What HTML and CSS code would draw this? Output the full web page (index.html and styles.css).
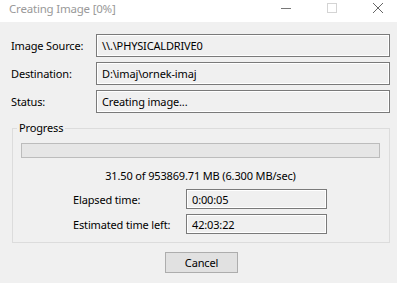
FILE: index.html
```html
<!DOCTYPE html>
<html lang="en">
<head>
  <meta charset="UTF-8" />
  <title>Creating Image [0%]</title>
  <link rel="stylesheet" href="styles.css">
</head>
<body>
  <div class="window">
    <header class="titlebar">
      <span class="title">Creating Image [0%]</span>
      <div class="controls">
        <svg class="ctl" width="10" height="10" viewBox="0 0 10 10"><path d="M0 5.5h10" stroke="#777" stroke-width="1"/></svg>
        <svg class="ctl" width="10" height="10" viewBox="0 0 10 10"><rect x="0.5" y="0.5" width="9" height="9" fill="none" stroke="#d4d4d4"/></svg>
        <svg class="ctl" width="10" height="10" viewBox="0 0 10 10"><path d="M0 0L10 10M10 0L0 10" stroke="#666" stroke-width="1"/></svg>
      </div>
    </header>

    <div class="client">
      <div class="fields">
        <label>Image Source:</label>
        <div class="box">\\.\PHYSICALDRIVE0</div>
        <label>Destination:</label>
        <div class="box">D:\imaj\ornek-imaj</div>
        <label>Status:</label>
        <div class="box">Creating image...</div>
      </div>

      <fieldset class="progress-group">
        <legend>Progress</legend>
        <div class="bar"></div>
        <p class="rate">31.50 of 953869.71 MB (6.300 MB/sec)</p>
        <div class="times">
          <label>Elapsed time:</label>
          <div class="box small">0:00:05</div>
          <label>Estimated time left:</label>
          <div class="box small">42:03:22</div>
        </div>
      </fieldset>

      <div class="actions">
        <button class="cancel-btn">Cancel</button>
      </div>
    </div>
  </div>
</body>
</html>
```

FILE: styles.css
```css
body {
  margin: 0;
  font-family: 'Noto Sans', 'Open Sans', sans-serif;
  font-size: 11px;
  letter-spacing: -0.15px;
  color: #000;
  background: #f0f0f0;
}

.window {
  width: 397px;
  height: 283px;
  overflow: hidden;
}

.titlebar {
  display: flex;
  justify-content: space-between;
  align-items: center;
  height: 22px;
  background: #fff;
  padding: 0 14px 6px 9px;
  box-sizing: border-box;
}

.title {
  color: #999;
  font-size: 11.5px;
  letter-spacing: -0.2px;
}

.controls {
  display: flex;
  gap: 36px;
}

.client {
  padding-top: 12px;
}

.fields {
  display: grid;
  grid-template-columns: 85px 294px;
  grid-auto-rows: 23px;
  row-gap: 5px;
  padding-left: 11px;
  align-items: center;
}

.box {
  height: 100%;
  box-sizing: border-box;
  border: 1px solid #7a7a7a;
  box-shadow: inset 0 0 0 1px #fff;
  padding-left: 5px;
  display: flex;
  align-items: center;
  white-space: nowrap;
}

.progress-group {
  margin: 7px 7px 0 12px;
  padding: 0 9px 8px 8px;
  border: 1px solid #dcdcdc;
}

.progress-group legend {
  margin-left: -4px;
  padding: 0 2px;
  line-height: 16px;
}

.bar {
  margin-top: 7px;
  height: 15px;
  box-sizing: border-box;
  background: #e6e6e6;
  border: 1px solid #bcbcbc;
}

.rate {
  margin: 10px 0 0;
  text-align: center;
  line-height: 16px;
}

.times {
  display: grid;
  grid-template-columns: 113px 141px;
  grid-auto-rows: 20px;
  row-gap: 5px;
  margin-top: 5px;
  padding-left: 52px;
  align-items: center;
}

.actions {
  display: flex;
  justify-content: center;
  margin-top: 9px;
  padding-left: 6px;
}

.cancel-btn {
  width: 73px;
  height: 21px;
  font: inherit;
  letter-spacing: inherit;
  background: #e1e1e1;
  border: 1px solid #adadad;
  padding: 0;
}
```
